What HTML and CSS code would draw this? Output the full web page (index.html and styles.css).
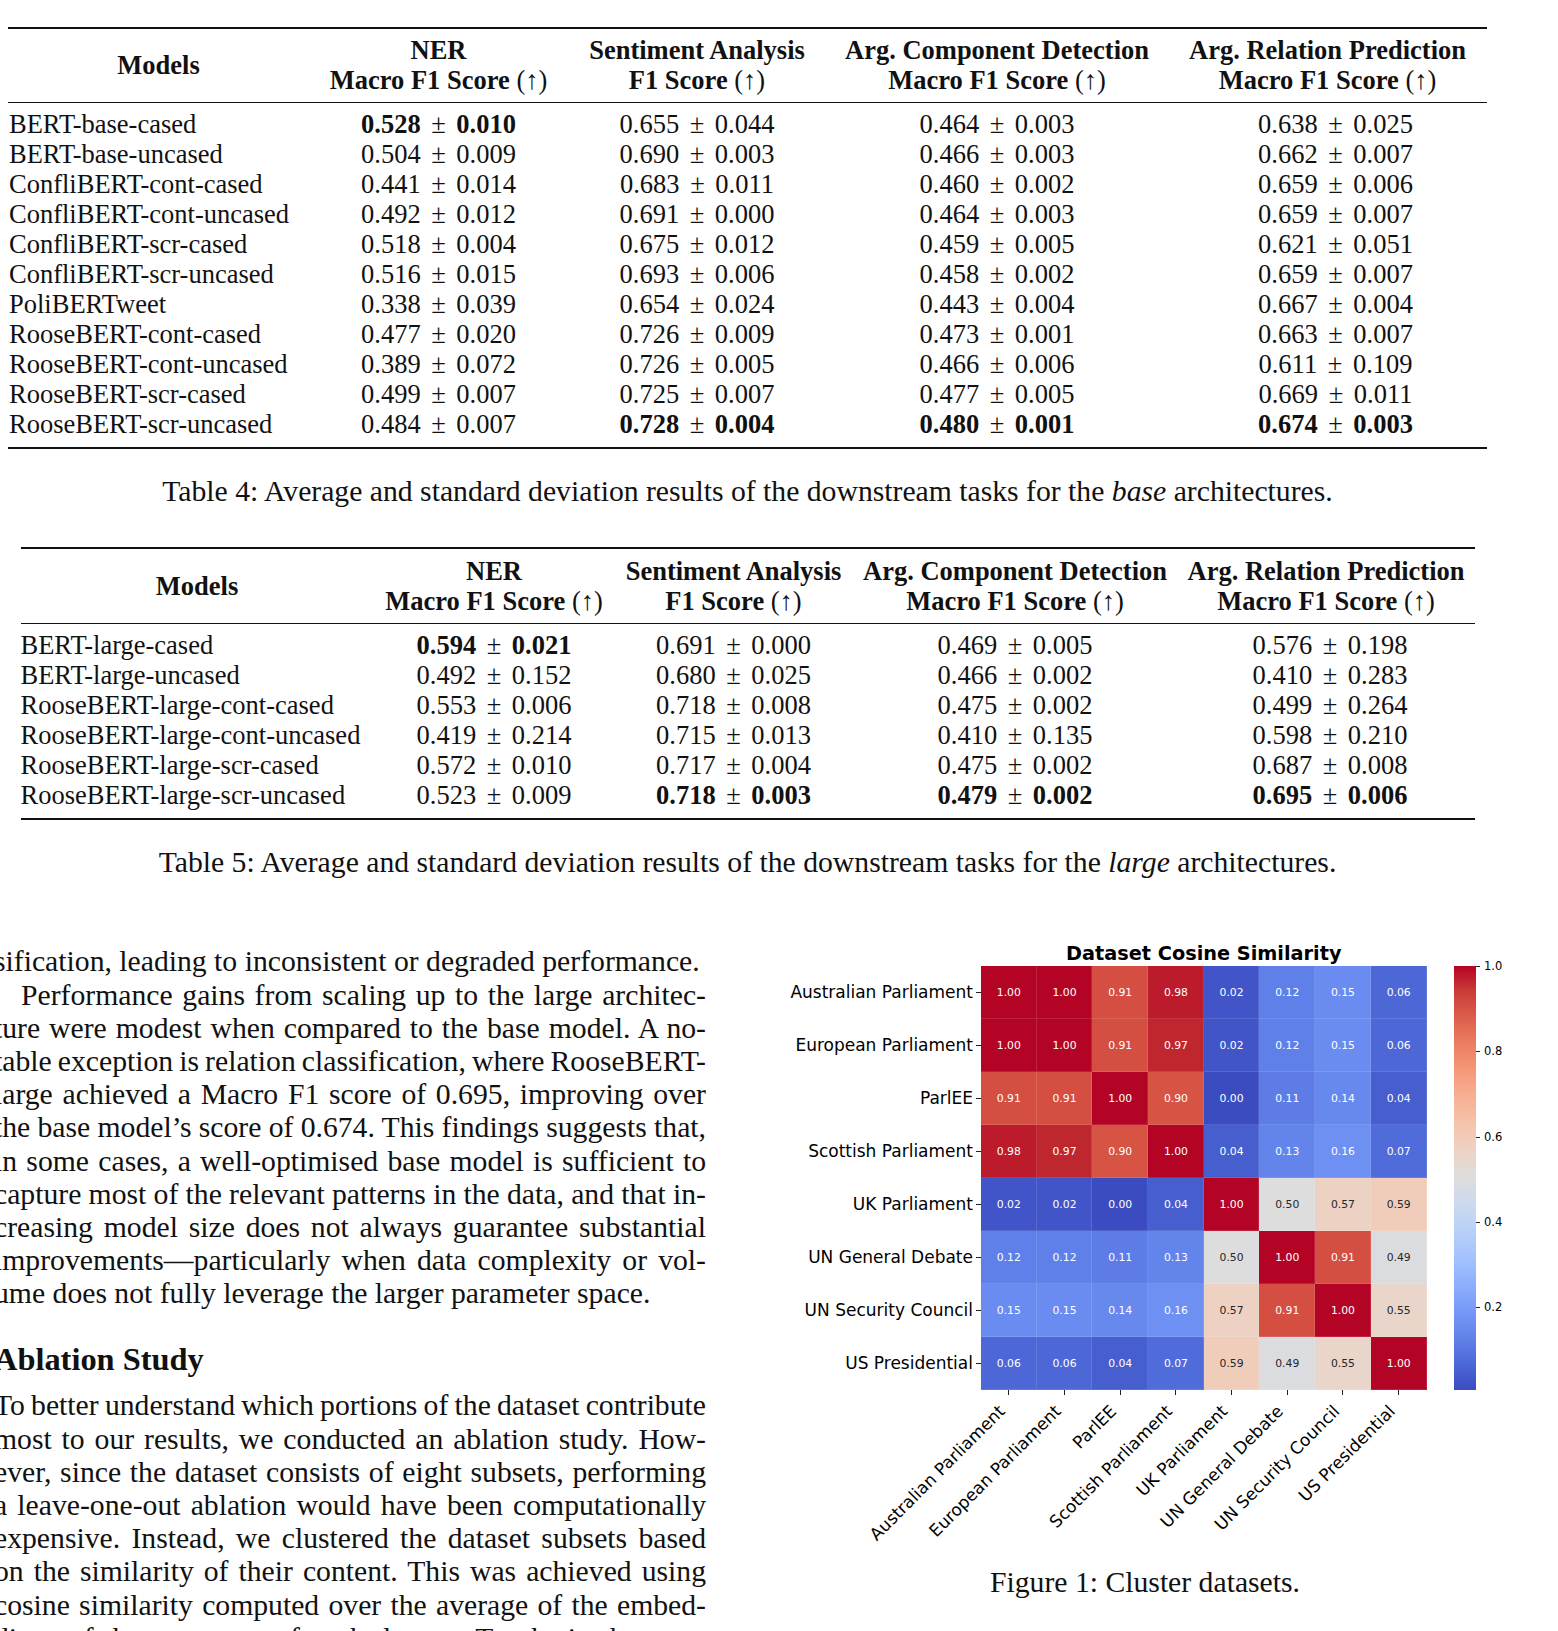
FILE: index.html
```html
<!DOCTYPE html>
<html lang="en">
<head>
<meta charset="utf-8">
<title>Results tables and dataset similarity</title>
<link rel="stylesheet" href="styles.css">
</head>
<body>
<div class="page">

  <table class="res-table t4">
    <colgroup>
      <col class="c1"><col class="c2"><col class="c3"><col class="c4"><col class="c5">
    </colgroup>
    <thead>
      <tr>
        <th>Models</th>
        <th>NER<br>Macro F1 Score <span class="ar">(↑)</span></th>
        <th>Sentiment Analysis<br>F1 Score <span class="ar">(↑)</span></th>
        <th>Arg. Component Detection<br>Macro F1 Score <span class="ar">(↑)</span></th>
        <th>Arg. Relation Prediction<br>Macro F1 Score <span class="ar">(↑)</span></th>
      </tr>
    </thead>
    <tbody>
      <tr><td class="m">BERT-base-cased</td><td><b>0.528</b><span class="pm">±</span><b>0.010</b></td><td>0.655<span class="pm">±</span>0.044</td><td>0.464<span class="pm">±</span>0.003</td><td class="last">0.638<span class="pm">±</span>0.025</td></tr>
      <tr><td class="m">BERT-base-uncased</td><td>0.504<span class="pm">±</span>0.009</td><td>0.690<span class="pm">±</span>0.003</td><td>0.466<span class="pm">±</span>0.003</td><td class="last">0.662<span class="pm">±</span>0.007</td></tr>
      <tr><td class="m">ConfliBERT-cont-cased</td><td>0.441<span class="pm">±</span>0.014</td><td>0.683<span class="pm">±</span>0.011</td><td>0.460<span class="pm">±</span>0.002</td><td class="last">0.659<span class="pm">±</span>0.006</td></tr>
      <tr><td class="m">ConfliBERT-cont-uncased</td><td>0.492<span class="pm">±</span>0.012</td><td>0.691<span class="pm">±</span>0.000</td><td>0.464<span class="pm">±</span>0.003</td><td class="last">0.659<span class="pm">±</span>0.007</td></tr>
      <tr><td class="m">ConfliBERT-scr-cased</td><td>0.518<span class="pm">±</span>0.004</td><td>0.675<span class="pm">±</span>0.012</td><td>0.459<span class="pm">±</span>0.005</td><td class="last">0.621<span class="pm">±</span>0.051</td></tr>
      <tr><td class="m">ConfliBERT-scr-uncased</td><td>0.516<span class="pm">±</span>0.015</td><td>0.693<span class="pm">±</span>0.006</td><td>0.458<span class="pm">±</span>0.002</td><td class="last">0.659<span class="pm">±</span>0.007</td></tr>
      <tr><td class="m">PoliBERTweet</td><td>0.338<span class="pm">±</span>0.039</td><td>0.654<span class="pm">±</span>0.024</td><td>0.443<span class="pm">±</span>0.004</td><td class="last">0.667<span class="pm">±</span>0.004</td></tr>
      <tr><td class="m">RooseBERT-cont-cased</td><td>0.477<span class="pm">±</span>0.020</td><td>0.726<span class="pm">±</span>0.009</td><td>0.473<span class="pm">±</span>0.001</td><td class="last">0.663<span class="pm">±</span>0.007</td></tr>
      <tr><td class="m">RooseBERT-cont-uncased</td><td>0.389<span class="pm">±</span>0.072</td><td>0.726<span class="pm">±</span>0.005</td><td>0.466<span class="pm">±</span>0.006</td><td class="last">0.611<span class="pm">±</span>0.109</td></tr>
      <tr><td class="m">RooseBERT-scr-cased</td><td>0.499<span class="pm">±</span>0.007</td><td>0.725<span class="pm">±</span>0.007</td><td>0.477<span class="pm">±</span>0.005</td><td class="last">0.669<span class="pm">±</span>0.011</td></tr>
      <tr><td class="m">RooseBERT-scr-uncased</td><td>0.484<span class="pm">±</span>0.007</td><td><b>0.728</b><span class="pm">±</span><b>0.004</b></td><td><b>0.480</b><span class="pm">±</span><b>0.001</b></td><td class="last"><b>0.674</b><span class="pm">±</span><b>0.003</b></td></tr>
    </tbody>
  </table>
  <p class="caption cap4">Table 4: Average and standard deviation results of the downstream tasks for the <i>base</i> architectures.</p>

  <table class="res-table t5">
    <colgroup>
      <col class="c1"><col class="c2"><col class="c3"><col class="c4"><col class="c5">
    </colgroup>
    <thead>
      <tr>
        <th>Models</th>
        <th>NER<br>Macro F1 Score <span class="ar">(↑)</span></th>
        <th>Sentiment Analysis<br>F1 Score <span class="ar">(↑)</span></th>
        <th>Arg. Component Detection<br>Macro F1 Score <span class="ar">(↑)</span></th>
        <th>Arg. Relation Prediction<br>Macro F1 Score <span class="ar">(↑)</span></th>
      </tr>
    </thead>
    <tbody>
      <tr><td class="m">BERT-large-cased</td><td><b>0.594</b><span class="pm">±</span><b>0.021</b></td><td>0.691<span class="pm">±</span>0.000</td><td>0.469<span class="pm">±</span>0.005</td><td class="last">0.576<span class="pm">±</span>0.198</td></tr>
      <tr><td class="m">BERT-large-uncased</td><td>0.492<span class="pm">±</span>0.152</td><td>0.680<span class="pm">±</span>0.025</td><td>0.466<span class="pm">±</span>0.002</td><td class="last">0.410<span class="pm">±</span>0.283</td></tr>
      <tr><td class="m">RooseBERT-large-cont-cased</td><td>0.553<span class="pm">±</span>0.006</td><td>0.718<span class="pm">±</span>0.008</td><td>0.475<span class="pm">±</span>0.002</td><td class="last">0.499<span class="pm">±</span>0.264</td></tr>
      <tr><td class="m">RooseBERT-large-cont-uncased</td><td>0.419<span class="pm">±</span>0.214</td><td>0.715<span class="pm">±</span>0.013</td><td>0.410<span class="pm">±</span>0.135</td><td class="last">0.598<span class="pm">±</span>0.210</td></tr>
      <tr><td class="m">RooseBERT-large-scr-cased</td><td>0.572<span class="pm">±</span>0.010</td><td>0.717<span class="pm">±</span>0.004</td><td>0.475<span class="pm">±</span>0.002</td><td class="last">0.687<span class="pm">±</span>0.008</td></tr>
      <tr><td class="m">RooseBERT-large-scr-uncased</td><td>0.523<span class="pm">±</span>0.009</td><td><b>0.718</b><span class="pm">±</span><b>0.003</b></td><td><b>0.479</b><span class="pm">±</span><b>0.002</b></td><td class="last"><b>0.695</b><span class="pm">±</span><b>0.006</b></td></tr>
    </tbody>
  </table>
  <p class="caption cap5">Table 5: Average and standard deviation results of the downstream tasks for the <i>large</i> architectures.</p>

  <div class="twocol">
    <div class="col-left">
      <p class="para">
        <span class="ln end">sification, leading to inconsistent or degraded performance.</span>
      </p>
      <p class="para">
        <span class="ln first">Performance gains from scaling up to the large architec-</span>
        <span class="ln">ture were modest when compared to the base model. A no-</span>
        <span class="ln">table exception is relation classification, where RooseBERT-</span>
        <span class="ln">large achieved a Macro F1 score of 0.695, improving over</span>
        <span class="ln">the base model’s score of 0.674. This findings suggests that,</span>
        <span class="ln">in some cases, a well-optimised base model is sufficient to</span>
        <span class="ln">capture most of the relevant patterns in the data, and that in-</span>
        <span class="ln">creasing model size does not always guarantee substantial</span>
        <span class="ln">improvements—particularly when data complexity or vol-</span>
        <span class="ln end">ume does not fully leverage the larger parameter space.</span>
      </p>
      <h3 class="sec">Ablation Study</h3>
      <p class="para">
        <span class="ln">To better understand which portions of the dataset contribute</span>
        <span class="ln">most to our results, we conducted an ablation study. How-</span>
        <span class="ln">ever, since the dataset consists of eight subsets, performing</span>
        <span class="ln">a leave-one-out ablation would have been computationally</span>
        <span class="ln">expensive. Instead, we clustered the dataset subsets based</span>
        <span class="ln">on the similarity of their content. This was achieved using</span>
        <span class="ln">cosine similarity computed over the average of the embed-</span>
        <span class="ln">dings of the sentences of each dataset. To obtain the most</span>
      </p>
    </div>

    <figure class="col-right fig">
      <div class="plot">
        <div class="hm-title">Dataset Cosine Similarity</div>

        <div class="ylabels">
          <div class="yl">Australian Parliament</div>
          <div class="yl">European Parliament</div>
          <div class="yl">ParlEE</div>
          <div class="yl">Scottish Parliament</div>
          <div class="yl">UK Parliament</div>
          <div class="yl">UN General Debate</div>
          <div class="yl">UN Security Council</div>
          <div class="yl">US Presidential</div>
        </div>

        <div class="heatmap">
          <div class="cell v100">1.00</div><div class="cell v100">1.00</div><div class="cell v091">0.91</div><div class="cell v098">0.98</div><div class="cell v002">0.02</div><div class="cell v012">0.12</div><div class="cell v015">0.15</div><div class="cell v006">0.06</div>
          <div class="cell v100">1.00</div><div class="cell v100">1.00</div><div class="cell v091">0.91</div><div class="cell v097">0.97</div><div class="cell v002">0.02</div><div class="cell v012">0.12</div><div class="cell v015">0.15</div><div class="cell v006">0.06</div>
          <div class="cell v091">0.91</div><div class="cell v091">0.91</div><div class="cell v100">1.00</div><div class="cell v090">0.90</div><div class="cell v000">0.00</div><div class="cell v011">0.11</div><div class="cell v014">0.14</div><div class="cell v004">0.04</div>
          <div class="cell v098">0.98</div><div class="cell v097">0.97</div><div class="cell v090">0.90</div><div class="cell v100">1.00</div><div class="cell v004">0.04</div><div class="cell v013">0.13</div><div class="cell v016">0.16</div><div class="cell v007">0.07</div>
          <div class="cell v002">0.02</div><div class="cell v002">0.02</div><div class="cell v000">0.00</div><div class="cell v004">0.04</div><div class="cell v100">1.00</div><div class="cell v050">0.50</div><div class="cell v057">0.57</div><div class="cell v059">0.59</div>
          <div class="cell v012">0.12</div><div class="cell v012">0.12</div><div class="cell v011">0.11</div><div class="cell v013">0.13</div><div class="cell v050">0.50</div><div class="cell v100">1.00</div><div class="cell v091">0.91</div><div class="cell v049">0.49</div>
          <div class="cell v015">0.15</div><div class="cell v015">0.15</div><div class="cell v014">0.14</div><div class="cell v016">0.16</div><div class="cell v057">0.57</div><div class="cell v091">0.91</div><div class="cell v100">1.00</div><div class="cell v055">0.55</div>
          <div class="cell v006">0.06</div><div class="cell v006">0.06</div><div class="cell v004">0.04</div><div class="cell v007">0.07</div><div class="cell v059">0.59</div><div class="cell v049">0.49</div><div class="cell v055">0.55</div><div class="cell v100">1.00</div>
        </div>

        <div class="cbar"></div>
        <div class="cbticks">
          <div class="cbt t10">1.0</div>
          <div class="cbt t08">0.8</div>
          <div class="cbt t06">0.6</div>
          <div class="cbt t04">0.4</div>
          <div class="cbt t02">0.2</div>
        </div>

        <div class="xlabels">
          <div class="xt"><span>Australian Parliament</span></div>
          <div class="xt"><span>European Parliament</span></div>
          <div class="xt"><span>ParlEE</span></div>
          <div class="xt"><span>Scottish Parliament</span></div>
          <div class="xt"><span>UK Parliament</span></div>
          <div class="xt"><span>UN General Debate</span></div>
          <div class="xt"><span>UN Security Council</span></div>
          <div class="xt"><span>US Presidential</span></div>
        </div>
      </div>
      <figcaption class="caption figcap">Figure 1: Cluster datasets.</figcaption>
    </figure>
  </div>

</div>
</body>
</html>
```

FILE: styles.css
```css
* { box-sizing: border-box; }

html, body {
  margin: 0;
  padding: 0;
  background: #ffffff;
}

body {
  width: 1558px;
  height: 1631px;
  overflow: hidden;
  font-family: "Liberation Serif", "Times New Roman", serif;
  color: #111;
}

.page {
  width: 1507px;
  margin-left: -6px;
}

/* ---------- results tables ---------- */
.res-table {
  border-collapse: separate;
  border-spacing: 0;
  table-layout: fixed;
  margin-left: auto;
  margin-right: auto;
  font-size: 26.5px;
  line-height: 30px;
}

.t4 { width: 1479px; margin-top: 27px; }
.t5 { width: 1454px; margin-top: 38.4px; }

.t4 .c1 { width: 301px; }
.t4 .c2 { width: 259px; }
.t4 .c3 { width: 258px; }
.t4 .c4 { width: 342px; }
.t4 .c5 { width: 319px; }

.t5 .c1 { width: 353px; }
.t5 .c2 { width: 241px; }
.t5 .c3 { width: 238px; }
.t5 .c4 { width: 325px; }
.t5 .c5 { width: 297px; }

.res-table th {
  font-weight: bold;
  text-align: center;
  vertical-align: middle;
  white-space: nowrap;
  border-top: 2px solid #111;
  border-bottom: 1px solid #111;
  padding: 6px 0 7px;
}

.t5 th { padding-top: 7px; }

.res-table .ar { font-weight: normal; }

.res-table td {
  text-align: center;
  white-space: nowrap;
  padding: 0;
}

.res-table td.m {
  text-align: left;
  padding-left: 1px;
}

.t5 td.m { padding-left: 0; }

.t4 td.last { padding-left: 16px; }
.t5 td.last { padding-left: 8px; }

.res-table tbody tr:first-child td { padding-top: 6px; }

.res-table tbody tr:last-child td {
  padding-bottom: 8px;
  border-bottom: 2px solid #111;
}

.pm {
  font-weight: normal;
  margin: 0 0.4em;
}

/* ---------- captions ---------- */
.caption {
  font-size: 29.7px;
  line-height: 33.2px;
  text-align: center;
  margin: 0;
}

.cap4, .cap5 { margin-top: 26.4px; }

/* ---------- two column body ---------- */
.twocol {
  display: flex;
  gap: 83px;
  margin-top: 62.4px;
}

.col-left {
  width: 712px;
  flex: none;
  font-size: 29.7px;
  line-height: 33.2px;
  padding-top: 3.4px;
}

.para { margin: 0; }

.ln {
  display: block;
  white-space: nowrap;
  text-align: justify;
  text-align-last: justify;
  word-spacing: -0.1em;
}

.ln.first { text-indent: 27px; }

.ln.end {
  text-align: left;
  text-align-last: left;
  word-spacing: 0;
}

.sec {
  font-size: 32.4px;
  line-height: 36px;
  font-weight: bold;
  margin: 30.4px 0 12.4px;
}

/* ---------- figure ---------- */
.col-right {
  width: 712px;
  flex: none;
  margin: 0;
}

.plot {
  display: grid;
  grid-template-columns: 192px 445.6px 27.4px 22px 1fr;
  grid-template-rows: 24px 424px 176.4px;
  font-family: "DejaVu Sans", sans-serif;
  color: #000;
}

.hm-title {
  grid-column: 2;
  grid-row: 1;
  text-align: center;
  font-weight: bold;
  font-size: 19.3px;
  line-height: 24px;
  white-space: nowrap;
}

.ylabels {
  grid-column: 1;
  grid-row: 2;
  display: flex;
  flex-direction: column;
}

.yl {
  position: relative;
  height: 53px;
  display: flex;
  align-items: center;
  justify-content: flex-end;
  padding-right: 8px;
  font-size: 17px;
  white-space: nowrap;
}

.yl::after {
  content: "";
  position: absolute;
  right: 0;
  top: 26px;
  width: 5px;
  height: 1px;
  background: #222;
}

.heatmap {
  grid-column: 2;
  grid-row: 2;
  display: grid;
  grid-template-columns: repeat(8, 55.7px);
  grid-template-rows: repeat(8, 53px);
}

.cell {
  display: flex;
  align-items: center;
  justify-content: center;
  font-size: 10.8px;
  color: #fff;
  box-shadow: inset -1px -1px 0 rgba(255, 255, 255, 0.12);
}

.v100 { background: #b40426; }
.v098 { background: #bc1b2c; }
.v097 { background: #bf272f; }
.v091 { background: #d44e41; }
.v090 { background: #d75344; }
.v059 { background: #f0cdbb; color: #262626; }
.v057 { background: #edd1c3; color: #262626; }
.v055 { background: #e9d5ca; color: #262626; }
.v050 { background: #dddddd; color: #262626; }
.v049 { background: #dadce0; color: #262626; }
.v016 { background: #6e90f2; }
.v015 { background: #6a8cf0; }
.v014 { background: #6788ed; }
.v013 { background: #6384eb; }
.v012 { background: #6080e9; }
.v011 { background: #5d7ce6; }
.v007 { background: #506bda; }
.v006 { background: #4d67d7; }
.v004 { background: #475ecf; }
.v002 { background: #4155c8; }
.v000 { background: #3b4cc0; }

.cbar {
  grid-column: 4;
  grid-row: 2;
  background: linear-gradient(to top,
    #3b4cc0 0%, #4d68d7 6.25%, #6282ea 12.5%, #7799f6 18.75%,
    #8db0fe 25%, #a3c2fe 31.25%, #b8d0f9 37.5%, #ccd9ee 43.75%,
    #dddddd 50%, #ecd3c5 56.25%, #f5c4ad 62.5%, #f7b194 68.75%,
    #f49a7b 75%, #ec7f63 81.25%, #de604d 87.5%, #cb3e38 93.75%,
    #b40426 100%);
}

.cbticks {
  grid-column: 5;
  grid-row: 2;
  position: relative;
}

.cbt {
  position: absolute;
  left: 0;
  transform: translateY(-50%);
  padding-left: 8px;
  font-size: 11.5px;
  line-height: 14px;
}

.cbt::before {
  content: "";
  position: absolute;
  left: 0;
  top: 7px;
  width: 4px;
  height: 1px;
  background: #222;
}

.t10 { top: 0; }
.t08 { top: 85.3px; }
.t06 { top: 170.6px; }
.t04 { top: 255.9px; }
.t02 { top: 341.2px; }

.xlabels {
  grid-column: 2;
  grid-row: 3;
  display: grid;
  grid-template-columns: repeat(8, 55.7px);
}

.xt { position: relative; }

.xt::before {
  content: "";
  position: absolute;
  left: 27.35px;
  top: 0;
  width: 1px;
  height: 5px;
  background: #222;
}

.xt span {
  position: absolute;
  right: calc(50% + 14px);
  top: 11px;
  transform-origin: 100% 0;
  transform: rotate(-45deg);
  white-space: nowrap;
  font-size: 17px;
  line-height: 20px;
}

.figcap {
  text-align: center;
}
```
